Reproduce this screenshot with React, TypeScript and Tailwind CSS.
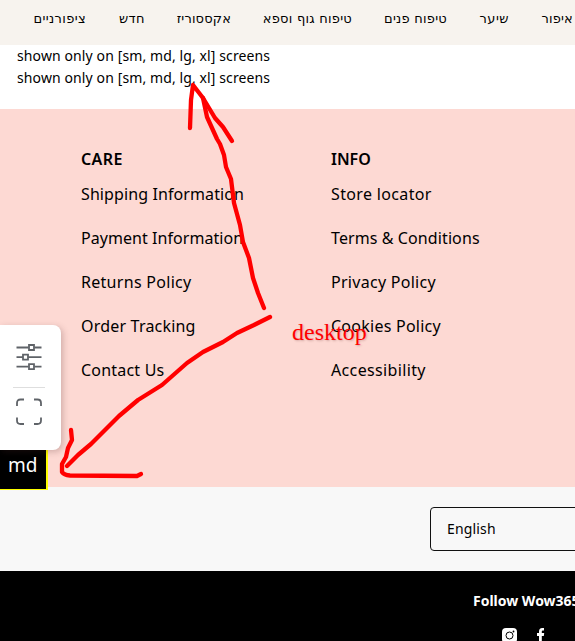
const navItems = [
  { label: 'ציפורניים', width: 'w-[53px]', tracking: 'tracking-[0.35px]' },
  { label: 'חדש', width: 'w-[27px]', tracking: 'tracking-[0.4px]' },
  { label: 'אקססוריז', width: 'w-[54px]', tracking: 'tracking-[0.15px]' },
  { label: 'טיפוח גוף וספא', width: 'w-[89px]', tracking: 'tracking-[0.25px]' },
  { label: 'טיפוח פנים', width: 'w-[63px]', tracking: 'tracking-[0.25px]' },
  { label: 'שיער', width: 'w-[30px]', tracking: 'tracking-[0.5px]' },
  { label: 'איפור', width: 'w-[32px]', tracking: 'tracking-[0.2px]' },
];

const columns = [
  {
    title: 'CARE',
    titleTracking: 'tracking-[0.4px]',
    links: [
      { label: 'Shipping Information', tracking: 'tracking-[0.1px]' },
      { label: 'Payment Information', tracking: 'tracking-[0.05px]' },
      { label: 'Returns Policy', tracking: 'tracking-[0.29px]' },
      { label: 'Order Tracking', tracking: 'tracking-[0.2px]' },
      { label: 'Contact Us', tracking: 'tracking-[0.2px]' },
    ],
  },
  {
    title: 'INFO',
    titleTracking: 'tracking-[0px]',
    links: [
      { label: 'Store locator', tracking: 'tracking-[0.35px]' },
      { label: 'Terms & Conditions', tracking: 'tracking-[0.1px]' },
      { label: 'Privacy Policy', tracking: 'tracking-[0.28px]' },
      { label: 'Cookies Policy', tracking: 'tracking-[0.25px]' },
      { label: 'Accessibility', tracking: 'tracking-[0.35px]' },
    ],
  },
];

function Nav() {
  return (
    <nav className="flex h-[45px] shrink-0 gap-8 bg-[#f7f3ee] pl-[33px] pt-[9px] font-['DejaVu_Sans',sans-serif] text-[13px] leading-5">
      {navItems.map((item) => (
        <a key={item.label} dir="rtl" className={`${item.width} ${item.tracking} shrink-0 whitespace-nowrap`}>
          {item.label}
        </a>
      ))}
    </nav>
  );
}

function FooterLinks() {
  return (
    <section className="flex h-[378px] shrink-0 bg-[#fdd9d3] pl-[81px] pt-[39px]">
      {columns.map((column) => (
        <div key={column.title} className="w-[250px] shrink-0 whitespace-nowrap">
          <h3 className={`h-[24px] text-[16px] font-semibold leading-[22px] ${column.titleTracking}`}>{column.title}</h3>
          <ul>
            {column.links.map((link) => (
              <li key={link.label} className={`h-11 text-[16px] leading-[44px] ${link.tracking}`}>
                {link.label}
              </li>
            ))}
          </ul>
        </div>
      ))}
    </section>
  );
}

function FloatingTools() {
  return (
    <aside className="absolute left-0 top-[325px] flex h-[125px] w-[61px] flex-col rounded-r-lg bg-white pl-[13px] pt-4 shadow-[2px_2px_6px_rgba(80,40,40,0.25)]">
      <svg width="32" height="32" viewBox="0 0 32 32" fill="none" stroke="#5f6368" strokeWidth="1.8">
        <path d="M3.5 6.5H15.5M21.5 6.5H28.5M3.5 16.2H10M15.2 16.2H28.5M3.5 25.7H15.5M21.5 25.7H28.5" />
        <path d="M16 4H21V9H16ZM10 13.700H15V18.700H10ZM16 23.200H21V28.200H16Z" />
      </svg>
      <div className="mt-[14px] h-px w-8 bg-[#dedede]" />
      <svg className="mt-[9px]" width="32" height="32" viewBox="0 0 32 32" fill="none" stroke="#5f6368" strokeWidth="1.8">
        <path d="M4 9V6Q4 2.500 7.500 2.500H11M21 2.500H24.500Q28 2.500 28 6V9M28 20.500V23.500Q28 27 24.500 27H21M11 27H7.500Q4 27 4 23.500V20.500" />
      </svg>
    </aside>
  );
}

function Annotations() {
  return (
    <>
      <svg
        className="pointer-events-none absolute inset-0"
        width="575"
        height="641"
        fill="none"
        stroke="#ff0000"
        strokeWidth="4.3"
        strokeLinecap="round"
        strokeLinejoin="round"
      >
        <path d="M190 128L191 100L193 85L203 98L215 118L223 127L232 141" />
        <path d="M203 98L207 117L217 139L220 144L224 155L226 167L231 179L234 203L240 225L243 242L249 258L253 278L258 293L264 308" />
        <path d="M270 317L254 325L237 333L223 342L203 352L187 363L162 385L138 400L119 416L91 444L78 455L67 466" />
        <path d="M71 430L72 440L68 448L66 457L62 464L62 472Q64 475 70 475.500L137 476L141 474" />
      </svg>
      <span className="absolute left-[292px] top-[318px] font-['Liberation_Serif',serif] text-[24px] leading-[28px] text-[#ff0000] [text-shadow:1px_1px_2px_rgba(120,60,60,0.3)]">
        desktop
      </span>
    </>
  );
}

export default function App() {
  return (
    <div className="relative flex h-[641px] w-[575px] flex-col overflow-hidden bg-white font-['Noto_Sans',sans-serif] text-black">
      <Nav />
      <div className="h-16 shrink-0 pl-[17px] text-[14px] leading-[22px] tracking-[0.11px]">
        <p>shown only on [sm, md, lg, xl] screens</p>
        <p>shown only on [sm, md, lg, xl] screens</p>
      </div>
      <FooterLinks />
      <section className="h-[84px] shrink-0 bg-[#f8f8f8] pl-[430px] pt-5">
        <div className="h-11 w-[200px] rounded border border-[#111] pl-4 text-[14px] leading-[42px] tracking-[0.15px]">English</div>
      </section>
      <footer className="h-[70px] shrink-0 overflow-hidden bg-black pl-[473px] pt-5 text-white">
        <div className="whitespace-nowrap text-[14px] font-bold leading-5">Follow Wow365</div>
        <div className="mt-[17px] flex pl-[29px]">
          <svg width="15" height="15" viewBox="0 0 15 15">
            <rect width="15" height="15" rx="4" fill="white" />
            <circle cx="7.500" cy="7.500" r="3.500" fill="none" stroke="black" strokeWidth="1" />
            <circle cx="11.500" cy="3.500" r="0.900" fill="black" />
          </svg>
          <svg className="ml-5" width="8" height="15" viewBox="0 0 8 15">
            <path d="M2 15V8H0V5H2V3.500Q2 0 5.200 0H7V2.500H5.800Q4.800 2.500 4.800 3.600V5H7.200L6.800 8H4.800V15Z" fill="white" />
          </svg>
        </div>
      </footer>
      <div className="absolute left-0 top-[445px] h-[45px] w-[47.500px] border-b border-r-2 border-[#ffff00] bg-black pl-2 pt-[6px] text-[19px] leading-[29px] text-white">
        md
      </div>
      <FloatingTools />
      <Annotations />
    </div>
  );
}
